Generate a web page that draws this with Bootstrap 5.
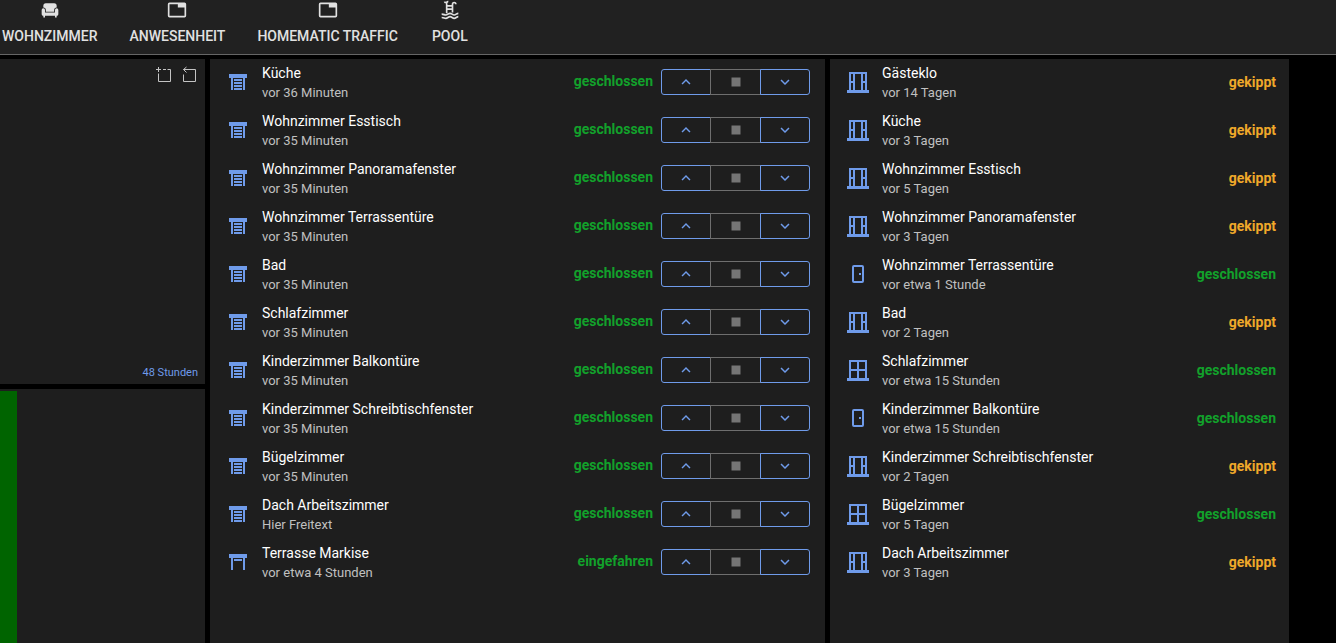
<!DOCTYPE html>
<html lang="de" data-bs-theme="dark">
<head>
<meta charset="utf-8">
<meta name="viewport" content="width=device-width, initial-scale=1">
<title>Rollläden und Fenster</title>
<link href="https://cdn.jsdelivr.net/npm/bootstrap@5.3.0/dist/css/bootstrap.min.css" rel="stylesheet">
<style>
  :root { --panel: #1e1e1e; --accent: #6f9bea; --muted-line: #6e6e6e; }
  body { background: #000; color: #fff; font-family: Roboto, "Liberation Sans", sans-serif; font-size: 14px; line-height: 20px; min-height: 100vh; }
  .topbar { background: #212121; border-bottom: 1px solid #666; height: 55px; }
  .topbar .nav { gap: 32px; padding-left: 2px; }
  .topbar .nav-link { color: #e1e1e1; font-weight: 500; line-height: 20px; padding: 0; min-width: 40px; white-space: nowrap; }
  .topbar .nav-link svg { width: 20px; height: 20px; margin-bottom: 6px; }
  .board { display: grid; grid-template-columns: 205fr 615fr 459fr; gap: 5px; padding: 4px 47px 0 0; }
  .stack { display: grid; grid-template-rows: 325px 1fr; gap: 5px; }
  .panel { background: var(--panel); }
  .tools { padding: 7px 6px 0 0; }
  .tool { color: #c4c4c4; line-height: 0; }
  .range { color: var(--accent); font-size: 11px; line-height: 16px; padding: 0 7px 3px 0; text-decoration: none; }
  .level { background: #006400; width: 17px; margin-top: 2px; }
  .entity { height: 48px; padding: 0 15px 2px 16px; }
  #windows .entity { padding-right: 13px; }
  .entity-icon { width: 24px; height: 24px; color: var(--accent); }
  .entity-text { padding: 2px 0 0 12px; }
  .entity-name { line-height: 20px; }
  .entity-time { font-size: 13px; line-height: 20px; color: #c0c0c0; }
  .state { font-weight: 700; line-height: 20px; }
  #covers .state { padding-bottom: 2px; }
  .closed { color: #12a12b; }
  .tilted { color: #f0a92a; }
  .cover .btn { width: 50px; height: 26px; padding: 0; border: 1px solid var(--accent); border-radius: 3px; color: var(--accent); line-height: 0; flex: none; }
  .cover .btn:disabled { width: 51px; border-color: var(--muted-line); color: #757575; opacity: 1; }
  .cover svg { width: 18px; height: 18px; }
</style>
</head>
<body class="d-flex flex-column">
<svg class="d-none" aria-hidden="true">
  <symbol id="shutter" viewBox="0 0 24 24"><path fill="currentColor" d="M3 4h18v4h-2v12h-2V8H7v12H5V8H3zM8 9h8v2H8zM8 12h8v2H8zM8 15h8v2H8zM8 18h8v2H8z"/></symbol>
  <symbol id="awning" viewBox="0 0 24 24"><path fill="currentColor" d="M3 4h18v4h-2v12h-2V8H7v12H5V8H3zM8 9h8v2H8z"/></symbol>
  <symbol id="tilted" viewBox="0 0 24 24"><path fill="currentColor" d="M21 20V2H3v18H1v3h22v-3M19 4v7h-2V4M5 4h2v7H5M5 20v-7h2v7M9 20V4h6v16M17 20v-7h2v7z"/></symbol>
  <symbol id="window" viewBox="0 0 24 24"><path fill="currentColor" d="M21 20V2H3v18H1v3h22v-3M19 11h-6V4h6M5 4h6v7H5M5 13h6v7H5M19 20h-6v-7h6z"/></symbol>
  <symbol id="door" viewBox="0 0 24 24"><rect x="7" y="4" width="10" height="16" rx="1" fill="none" stroke="currentColor" stroke-width="2"/><path fill="currentColor" d="M13 11h2v2h-2z"/></symbol>
  <symbol id="up" viewBox="0 0 24 24"><path fill="currentColor" d="M7.41 15.41 12 10.83l4.59 4.58L18 14l-6-6-6 6z"/></symbol>
  <symbol id="down" viewBox="0 0 24 24"><path fill="currentColor" d="M7.41 8.58 12 13.17l4.59-4.59L18 10l-6 6-6-6z"/></symbol>
  <symbol id="stop" viewBox="0 0 24 24"><path fill="currentColor" d="M6 6h12v12H6z"/></symbol>
</svg>

<nav class="topbar">
  <ul class="nav flex-nowrap">
    <li class="nav-item"><a class="nav-link d-flex flex-column align-items-center" href="#"><svg viewBox="0 0 24 24" fill="currentColor"><path d="M7 4h10a3 3 0 0 1 3 3v2a3 3 0 0 0-3 3v2H7v-2a3 3 0 0 0-3-3V7a3 3 0 0 1 3-3zM4 10a2 2 0 0 1 2 2v3h12v-3a2 2 0 1 1 4 0v5a2 2 0 0 1-2 2v2h-2v-2H6v2H4v-2a2 2 0 0 1-2-2v-5a2 2 0 0 1 2-2z"/></svg>WOHNZIMMER</a></li>
    <li class="nav-item"><a class="nav-link d-flex flex-column align-items-center" href="#"><svg viewBox="0 0 24 24" fill="currentColor"><path d="M21 3H3a2 2 0 0 0-2 2v14a2 2 0 0 0 2 2h18a2 2 0 0 0 2-2V5a2 2 0 0 0-2-2m0 16H3V5h10v4h8z"/></svg>ANWESENHEIT</a></li>
    <li class="nav-item"><a class="nav-link d-flex flex-column align-items-center" href="#"><svg viewBox="0 0 24 24" fill="currentColor"><path d="M21 3H3a2 2 0 0 0-2 2v14a2 2 0 0 0 2 2h18a2 2 0 0 0 2-2V5a2 2 0 0 0-2-2m0 16H3V5h10v4h8z"/></svg>HOMEMATIC TRAFFIC</a></li>
    <li class="nav-item"><a class="nav-link d-flex flex-column align-items-center" href="#"><svg viewBox="0 0 24 24" fill="none" stroke="currentColor" stroke-width="2"><path d="M2 17c3 0 3 1 5 1s3-2 5-2 3 2 5 2 3-2 5-2M2 21c3 0 3 1 5 1s3-2 5-2 3 2 5 2 3-2 5-2M8 16V5a2 2 0 0 0-3-2M15 15V5a2 2 0 0 1 4 0M8 3a2 2 0 0 1 2-1M8 7h7M8 11h7"/></svg>POOL</a></li>
  </ul>
</nav>

<main class="board flex-grow-1">
  <div class="stack">
    <section class="panel d-flex flex-column justify-content-between align-items-end">
      <div class="tools d-flex gap-2">
        <button type="button" class="btn border-0 p-0 tool" aria-label="Bereich zoomen"><svg width="18" height="18" viewBox="0 0 18 18" fill="none" stroke="currentColor"><path d="M1 3.500h5M3.500 1v5M8 3.500h3M12.500 3.500h3v12h-12v-8"/></svg></button>
        <button type="button" class="btn border-0 p-0 tool" aria-label="Zoom zurücksetzen"><svg width="18" height="18" viewBox="0 0 18 18" fill="none" stroke="currentColor"><path d="M5.500 1 2.500 3.500l3 3M2.500 3.500h12v12h-12v-7"/></svg></button>
      </div>
      <a class="range" href="#">48 Stunden</a>
    </section>
    <section class="panel d-flex"><div class="level"></div></section>
  </div>
  <section class="panel" id="covers"></section>
  <section class="panel" id="windows"></section>
</main>

<script>
  const covers = [
    ['Küche', 'vor 36 Minuten'], ['Wohnzimmer Esstisch', 'vor 35 Minuten'],
    ['Wohnzimmer Panoramafenster', 'vor 35 Minuten'], ['Wohnzimmer Terrassentüre', 'vor 35 Minuten'],
    ['Bad', 'vor 35 Minuten'], ['Schlafzimmer', 'vor 35 Minuten'],
    ['Kinderzimmer Balkontüre', 'vor 35 Minuten'], ['Kinderzimmer Schreibtischfenster', 'vor 35 Minuten'],
    ['Bügelzimmer', 'vor 35 Minuten'], ['Dach Arbeitszimmer', 'Hier Freitext'],
    ['Terrasse Markise', 'vor etwa 4 Stunden', 'awning', 'eingefahren']
  ];
  const windows = [
    ['Gästeklo', 'vor 14 Tagen', 'tilted'], ['Küche', 'vor 3 Tagen', 'tilted'],
    ['Wohnzimmer Esstisch', 'vor 5 Tagen', 'tilted'], ['Wohnzimmer Panoramafenster', 'vor 3 Tagen', 'tilted'],
    ['Wohnzimmer Terrassentüre', 'vor etwa 1 Stunde', 'door'], ['Bad', 'vor 2 Tagen', 'tilted'],
    ['Schlafzimmer', 'vor etwa 15 Stunden', 'window'], ['Kinderzimmer Balkontüre', 'vor etwa 15 Stunden', 'door'],
    ['Kinderzimmer Schreibtischfenster', 'vor 2 Tagen', 'tilted'], ['Bügelzimmer', 'vor 5 Tagen', 'window'],
    ['Dach Arbeitszimmer', 'vor 3 Tagen', 'tilted']
  ];
  const icon = (id, cls = '') => `<svg class="${cls}" aria-hidden="true"><use href="#${id}"/></svg>`;
  const row = (name, time, symbol, end) => `
    <div class="entity d-flex align-items-center">
      ${icon(symbol, 'entity-icon flex-shrink-0')}
      <div class="flex-grow-1 entity-text"><div class="entity-name">${name}</div><div class="entity-time">${time}</div></div>
      ${end}
    </div>`;
  document.getElementById('covers').innerHTML = covers.map(([n, t, s = 'shutter', state = 'geschlossen']) => row(n, t, s, `
      <span class="state closed me-2">${state}</span>
      <div class="btn-group cover" role="group" aria-label="${n}">
        <button type="button" class="btn" aria-label="Öffnen">${icon('up')}</button>
        <button type="button" class="btn" aria-label="Stopp" disabled>${icon('stop')}</button>
        <button type="button" class="btn" aria-label="Schließen">${icon('down')}</button>
      </div>`)).join('');
  document.getElementById('windows').innerHTML = windows.map(([n, t, s]) => row(n, t, s,
      s === 'tilted' ? '<span class="state tilted">gekippt</span>' : '<span class="state closed">geschlossen</span>')).join('');
</script>
<script src="https://cdn.jsdelivr.net/npm/bootstrap@5.3.0/dist/js/bootstrap.bundle.min.js"></script>
</body>
</html>
